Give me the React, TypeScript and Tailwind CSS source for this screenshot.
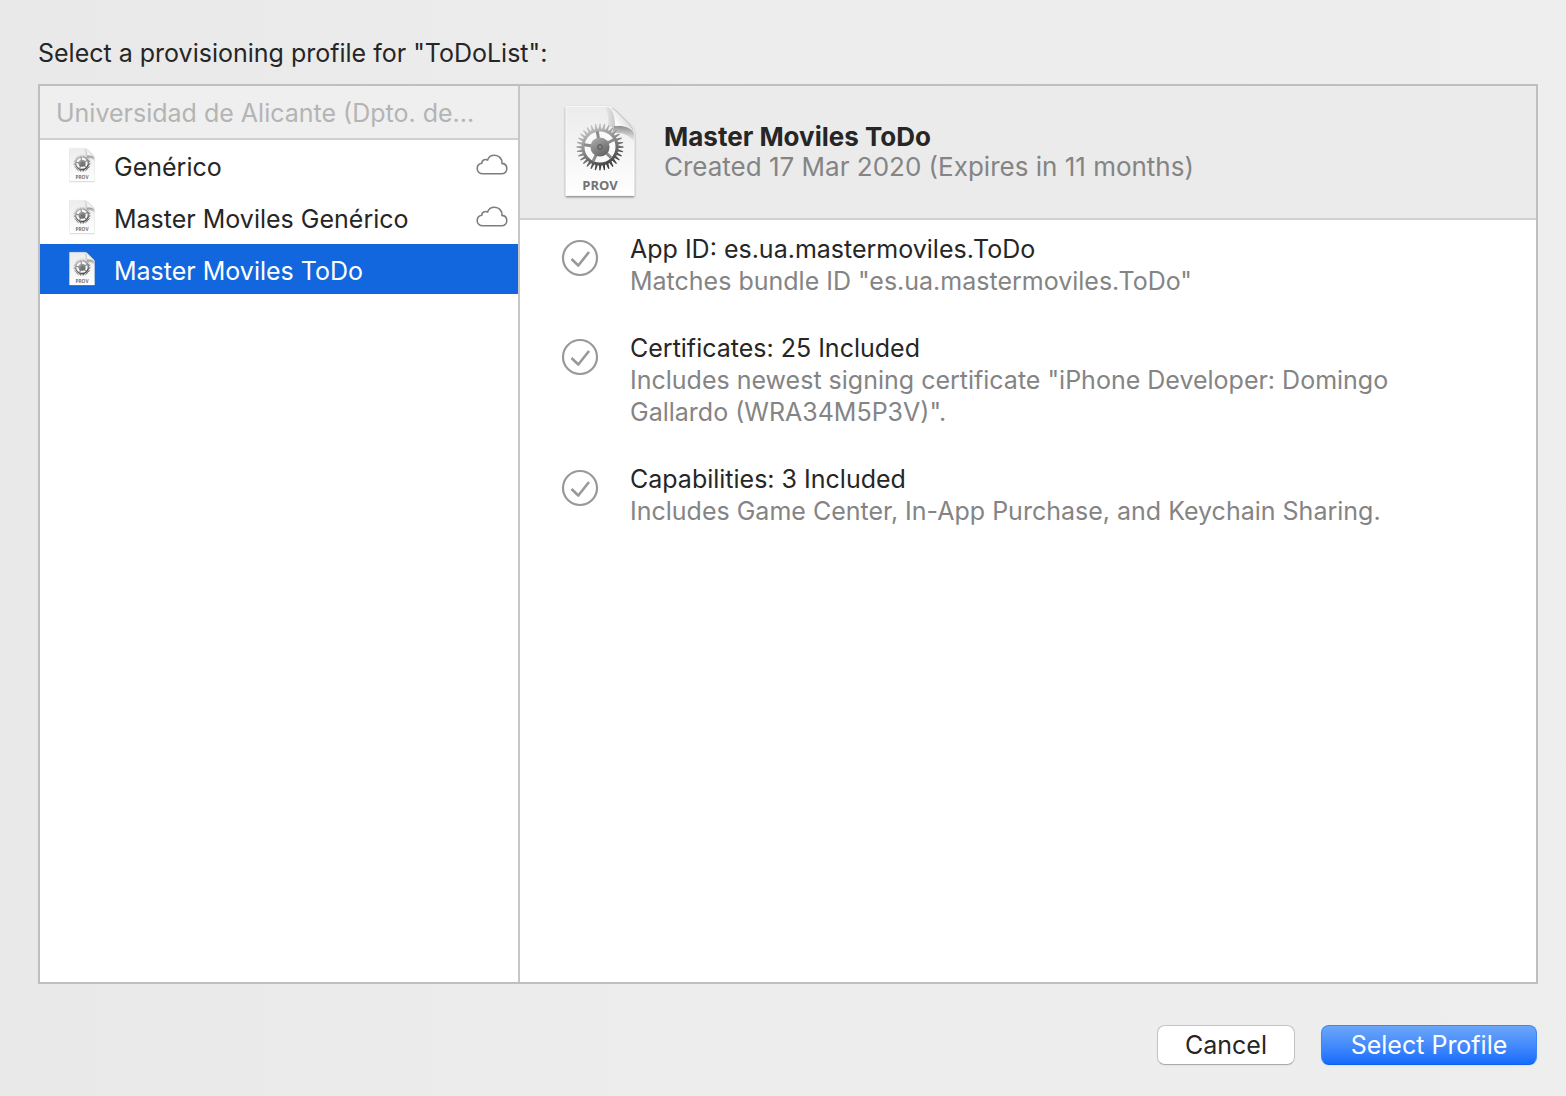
import { useState } from "react";

const TEETH = 32;

function gearOutline(cx: number, cy: number, outer: number, inner: number) {
  const points: string[] = [];
  for (let i = 0; i < TEETH; i++) {
    const step = (Math.PI * 2) / TEETH;
    const a = i * step;
    const at = (r: number, t: number) =>
      `${(cx + r * Math.cos(t)).toFixed(2)},${(cy + r * Math.sin(t)).toFixed(2)}`;
    points.push(
      at(inner, a - step * 0.4),
      at(outer, a - step * 0.1),
      at(outer, a + step * 0.14),
      at(inner, a + step * 0.28),
    );
  }
  return `M${points.join("L")}Z`;
}

const GEAR = gearOutline(38, 44, 23.5, 18.5);
const HOLE = "M22.5 44a15.5 15.5 0 1 0 31 0a15.5 15.5 0 1 0 -31 0Z";

function ProfileIcon({ id, className }: { id: string; className: string }) {
  return (
    <svg viewBox="0 0 76 98" className={className} aria-hidden="true">
      <defs>
        <linearGradient id={`${id}-page`} x1="0" y1="0" x2="0" y2="1">
          <stop offset="0" stopColor="#ececec" />
          <stop offset="0.5" stopColor="#f5f5f5" />
          <stop offset="1" stopColor="#ffffff" />
        </linearGradient>
        <linearGradient id={`${id}-gear`} x1="0.25" y1="0" x2="0.7" y2="1">
          <stop offset="0" stopColor="#cfcfcf" />
          <stop offset="0.5" stopColor="#858585" />
          <stop offset="1" stopColor="#2f2f2f" />
        </linearGradient>
        <linearGradient id={`${id}-hub`} x1="0" y1="0" x2="0.6" y2="1">
          <stop offset="0" stopColor="#b0b0b0" />
          <stop offset="1" stopColor="#666666" />
        </linearGradient>
        <linearGradient id={`${id}-fold`} x1="0" y1="0.8" x2="0.6" y2="0.4">
          <stop offset="0" stopColor="#e4e4e4" />
          <stop offset="0.45" stopColor="#ffffff" />
          <stop offset="1" stopColor="#e2e2e2" />
        </linearGradient>
        <linearGradient id={`${id}-shade`} x1="0.5" y1="0" x2="0.4" y2="1">
          <stop offset="0" stopColor="#8a8a8a" />
          <stop offset="1" stopColor="#b0b0b0" stopOpacity="0" />
        </linearGradient>
        <linearGradient id={`${id}-bend`} x1="0" y1="0" x2="1" y2="0">
          <stop offset="0" stopColor="#c8c8c8" stopOpacity="0" />
          <stop offset="1" stopColor="#c8c8c8" />
        </linearGradient>
        <filter id={`${id}-shadow`} x="-10%" y="-10%" width="120%" height="120%">
          <feDropShadow dx="0" dy="1.2" stdDeviation="1" floodOpacity="0.5" />
        </filter>
      </defs>
      <path
        d="M4 3.500H44C49 3.500 51 5 54 8L68 22C71 25 72 27 72 31V92.500H4Z"
        fill={`url(#${id}-page)`}
        stroke="#ffffff"
        strokeWidth="0.7"
        filter={`url(#${id}-shadow)`}
      />
      <path d="M42 4H46C51 7 53 14 53 24H46C47 15 46 8 42 4Z" fill={`url(#${id}-bend)`} />
      <path d="M52 23C60 22 69 24 72 30V39C67 32 60 29 50 30Z" fill={`url(#${id}-shade)`} />
      <path d="M46 3.500C51 6 54 13 53 23C61 22 69 24 72 30C72 27 71 25 68 22L54 8C51 5 49 4 46 3.500Z" fill={`url(#${id}-fold)`} />
      <path d="M50 5L54 8L68 22L71.500 27" fill="none" stroke="#b5b5b5" strokeWidth="0.7" />
      <path d={HOLE} fill="#fafafa" />
      <path d={GEAR + HOLE} fillRule="evenodd" fill={`url(#${id}-gear)`} />
      <g stroke="#8a8a8a" strokeWidth="3">
        {[-100, -28, 44, 116, 188].map((angle) => (
          <path key={angle} d="M38 44H54" transform={`rotate(${angle} 38 44)`} />
        ))}
      </g>
      <circle cx="38" cy="44" r="9.6" fill={`url(#${id}-hub)`} />
      <circle cx="38" cy="44" r="2.4" fill="#858585" stroke="#555555" strokeWidth="1" />
      <text
        x="38"
        y="87"
        textAnchor="middle"
        fontFamily="'Open Sans', sans-serif"
        fontSize="13"
        fontWeight="700"
        fill="#737373"
      >
        PROV
      </text>
    </svg>
  );
}

function CloudIcon() {
  return (
    <svg viewBox="0 0 32 22" className="h-[22px] w-8 shrink-0" fill="none" stroke="#7d7d7d" strokeWidth="1.6" role="img" aria-label="Managed in the cloud">
      <path d="M7 19.8H25.4C28.6 19.8 30.8 17.6 30.8 14.6C30.8 11.8 28.8 9.700 26 9.400C26.400 4.800 23 1.300 18.600 1.300C15.300 1.300 12.600 3.100 11.600 6C8.700 4.600 5.900 6.300 5.700 9.300C3 9.800 1.200 11.900 1.200 14.600C1.200 17.600 3.700 19.800 7 19.800Z" />
    </svg>
  );
}

function CheckIcon() {
  return (
    <svg viewBox="0 0 38 38" className="mt-1.5 size-[38px] shrink-0" fill="none" stroke="#999999" aria-hidden="true">
      <circle cx="19" cy="19" r="17" strokeWidth="2.2" />
      <path d="M10.500 20L17.300 26.500L28 13" strokeWidth="2.600" strokeLinejoin="round" />
    </svg>
  );
}

const profiles = [
  { id: "generico", name: "Genérico", cloud: true },
  { id: "master-generico", name: "Master Moviles Genérico", cloud: true },
  { id: "master-todo", name: "Master Moviles ToDo", cloud: false },
];

const checks = [
  { title: "App ID: es.ua.mastermoviles.ToDo", detail: 'Matches bundle ID "es.ua.mastermoviles.ToDo"' },
  {
    title: "Certificates: 25 Included",
    detail: 'Includes newest signing certificate "iPhone Developer: Domingo Gallardo (WRA34M5P3V)".',
  },
  { title: "Capabilities: 3 Included", detail: "Includes Game Center, In-App Purchase, and Keychain Sharing." },
];

export default function App() {
  const [selected, setSelected] = useState("master-todo");

  return (
    <main className="flex min-h-screen flex-col bg-linear-to-r from-[#e9e9e9] via-[#ededed] to-[#eeeeee] pt-[37px] pr-7 pb-[31px] pl-[38px] font-['Inter',sans-serif] text-[25px] leading-8 text-[#262626]">
      <h1>Select a provisioning profile for "ToDoList":</h1>

      <div className="mt-[15px] flex flex-1 border-2 border-[#bfbfbf] bg-white">
        <nav aria-label="Provisioning profiles" className="w-[480px] shrink-0 border-r-2 border-[#c6c6c6]">
          <h2 className="flex h-[54px] items-center border-b-2 border-[#d0d0d0] bg-[#efefef] px-4 pt-0.5 whitespace-nowrap text-[#b4b4b4]">
            Universidad de Alicante (Dpto. de...
          </h2>
          <ul className="flex flex-col gap-0.5">
            {profiles.map((profile) => {
              const active = profile.id === selected;
              return (
                <li key={profile.id}>
                  <button
                    type="button"
                    aria-pressed={active}
                    onClick={() => setSelected(profile.id)}
                    className={`flex h-[50px] w-full items-center pr-2.5 pl-7 text-left ${active ? "bg-[#1267df] text-white" : ""}`}
                  >
                    <ProfileIcon id={profile.id} className="h-9 w-7 shrink-0" />
                    <span className="ml-[18px] flex-1 pt-1">{profile.name}</span>
                    {profile.cloud && <CloudIcon />}
                  </button>
                </li>
              );
            })}
          </ul>
        </nav>

        <section className="min-w-0 flex-1">
          <header className="flex h-[134px] items-center border-b-2 border-[#d0d0d0] bg-[#ebebeb] pl-[42px]">
            <ProfileIcon id="detail" className="h-[98px] w-[76px] shrink-0" />
            <div className="ml-[26px] text-[26px] leading-[30px]">
              <h2 className="font-bold">Master Moviles ToDo</h2>
              <p className="text-[#848484]">Created 17 Mar 2020 (Expires in 11 months)</p>
            </div>
          </header>
          <ul className="flex flex-col gap-[35px] pt-[13px] pr-[100px] pl-[41px]">
            {checks.map((check) => (
              <li key={check.title} className="flex gap-[31px]">
                <CheckIcon />
                <div>
                  <h3>{check.title}</h3>
                  <p className="text-[#848484]">{check.detail}</p>
                </div>
              </li>
            ))}
          </ul>
        </section>
      </div>

      <footer className="mt-[41px] flex justify-end gap-[26px] pr-px">
        <button type="button" className="h-10 w-[138px] rounded-lg border border-[#c4c4c4] border-b-[#ababab] bg-white shadow-xs">
          Cancel
        </button>
        <button type="button" className="h-10 w-[216px] rounded-lg border border-[#3d86f5] border-b-[#0f62e8] bg-linear-to-b from-[#6ca6f9] to-[#136cfd] text-white shadow-xs">
          Select Profile
        </button>
      </footer>
    </main>
  );
}
